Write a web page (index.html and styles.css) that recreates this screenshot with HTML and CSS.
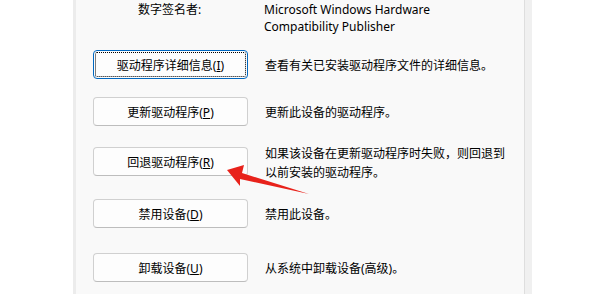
FILE: index.html
```html
<!DOCTYPE html>
<html lang="zh-CN">
<head>
<meta charset="utf-8">
<link rel="stylesheet" href="styles.css">
</head>
<body>
<div class="frame">
  <div class="panel">
    <div class="info">
      <div class="info-label">数字签名者:</div>
      <div class="info-value">Microsoft Windows Hardware<br>Compatibility Publisher</div>
    </div>
    <div class="row row-1">
      <button class="btn btn-focus">驱动程序详细信息(<u>I</u>)</button>
      <div class="desc">查看有关已安装驱动程序文件的详细信息。</div>
    </div>
    <div class="row row-2">
      <button class="btn">更新驱动程序(<u>P</u>)</button>
      <div class="desc">更新此设备的驱动程序。</div>
    </div>
    <div class="row row-3">
      <button class="btn">回退驱动程序(<u>R</u>)</button>
      <div class="desc">如果该设备在更新驱动程序时失败，则回退到以前安装的驱动程序。</div>
    </div>
    <div class="row row-4">
      <button class="btn">禁用设备(<u>D</u>)</button>
      <div class="desc">禁用此设备。</div>
    </div>
    <div class="row row-5">
      <button class="btn">卸载设备(<u>U</u>)</button>
      <div class="desc">从系统中卸载设备(高级)。</div>
    </div>
  </div>
</div>
<svg class="arrow" width="600" height="294" viewBox="0 0 600 294">
  <polygon points="227,170 244,165 242,173 309,194 240,179 240,186" fill="#e8221b"/>
</svg>
</body>
</html>
```

FILE: styles.css
```css
html, body {
  margin: 0;
  padding: 0;
  background: #ffffff;
}
body {
  width: 600px;
  height: 294px;
  overflow: hidden;
  position: relative;
  font-family: "Noto Sans", "Noto Sans CJK SC", sans-serif;
  font-size: 12px;
  color: #000000;
}
.frame {
  margin-left: 73px;
  width: 449px;
  height: 294px;
  border-left: 3px solid #ececec;
  border-right: 7px solid #f0f0f0;
  box-sizing: content-box;
}
.panel {
  height: 294px;
  background: #f9f9f9;
  border-right: 1px solid #dedede;
  box-sizing: border-box;
  padding-left: 17px;
  padding-top: 1px;
}
.info {
  display: flex;
  line-height: 17px;
  height: 34px;
  overflow: hidden;
}
.info-label {
  margin-left: 45px;
  width: 126px;
}
.row {
  display: flex;
  align-items: center;
  height: 29px;
}
.row-1 { margin-top: 15px; }
.row-2 { margin-top: 18px; }
.row-3 { margin-top: 21px; }
.row-4 { margin-top: 23px; }
.row-5 { margin-top: 25px; }
.btn {
  width: 155px;
  height: 29px;
  flex: none;
  background: #fdfdfd;
  border: 1px solid #d0d0d0;
  border-bottom-color: #bdbdbd;
  border-radius: 4px;
  font-family: inherit;
  font-size: 12px;
  color: #000000;
  padding: 0;
  margin: 0;
}
.btn-focus {
  border: 1px solid #0067c0;
  outline: 1px dotted #000000;
  outline-offset: -3px;
}
.desc {
  margin-left: 17px;
  width: 244px;
  line-height: 19px;
  padding-top: 2px;
}
.arrow {
  position: absolute;
  left: 0;
  top: 0;
}
```
